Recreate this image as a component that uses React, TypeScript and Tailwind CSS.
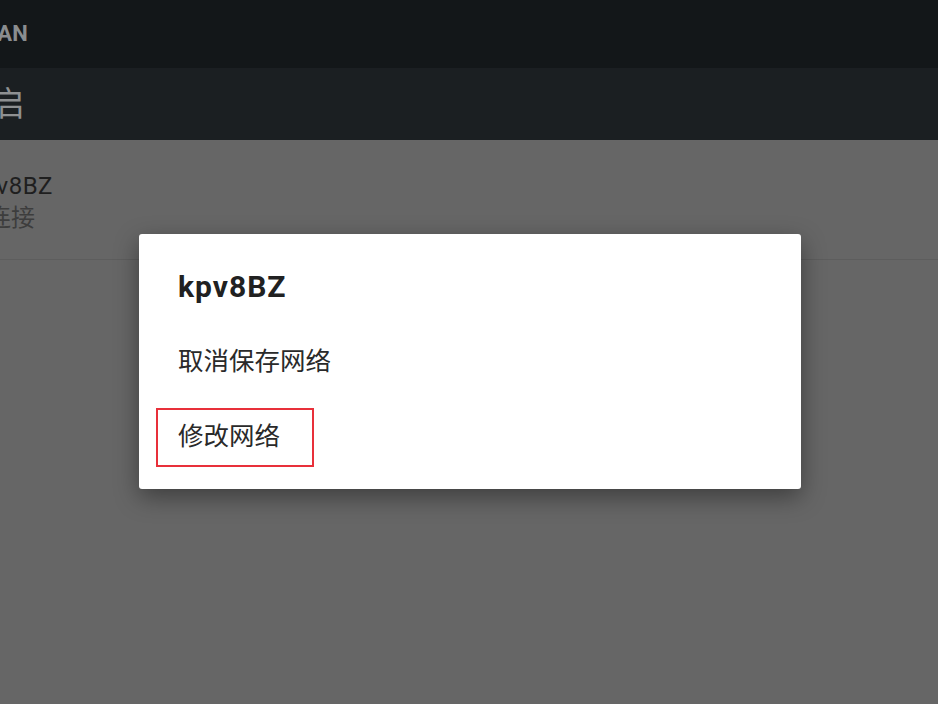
import React from 'react';

const FONT = { fontFamily: 'Roboto, "Noto Sans CJK SC", sans-serif' };

const App: React.FC = () => {
  return (
    <div className="relative w-[938px] h-[704px] overflow-hidden bg-[#666666]" style={FONT}>
      {/* Header bar */}
      <header className="h-[68px] bg-[#131719] flex items-center">
        <span className="ml-[-34px] text-[22px] leading-[22px] font-bold text-[#8a8d8f] whitespace-nowrap">WLAN</span>
      </header>

      {/* Sub bar */}
      <div className="h-[72px] bg-[#1b1f22] flex items-center">
        <span className="ml-[-77px] text-[34px] leading-[34px] text-[#8e9092] whitespace-nowrap">已开启</span>
      </div>

      {/* Network row (dimmed) */}
      <div className="h-[120px] border-b border-[#5d5d5d] flex flex-col pt-[32px]">
        <span className="ml-[-30px] text-[24px] leading-[29px] tracking-[0.5px] text-[#1f1f1f] whitespace-nowrap">kpv8BZ</span>
        <span className="ml-[-37px] mt-[2px] text-[24px] leading-[30px] text-[#3d3d3d] whitespace-nowrap">已连接</span>
      </div>

      {/* Dialog */}
      <div className="absolute left-[139px] top-[234px] w-[662px] h-[255px] bg-white rounded-[3px] shadow-[0_8px_24px_rgba(0,0,0,0.4)] flex flex-col pl-[39px] pt-[38px]">
        <h2 className="text-[30px] leading-[30px] font-bold tracking-[1px] text-[#212121]">kpv8BZ</h2>
        <div className="mt-[21px] h-[75px] flex items-center">
          <span className="text-[25.5px] leading-[30px] text-[#2a2a2a]">取消保存网络</span>
        </div>
        <div className="h-[75px] flex items-center">
          <span className="text-[25.5px] leading-[30px] text-[#2a2a2a]">修改网络</span>
        </div>

        {/* Highlight annotation */}
        <div className="absolute left-[17px] top-[174px] w-[158px] h-[59px] border-2 border-[#e8303a]" />
      </div>
    </div>
  );
};

export default App;
